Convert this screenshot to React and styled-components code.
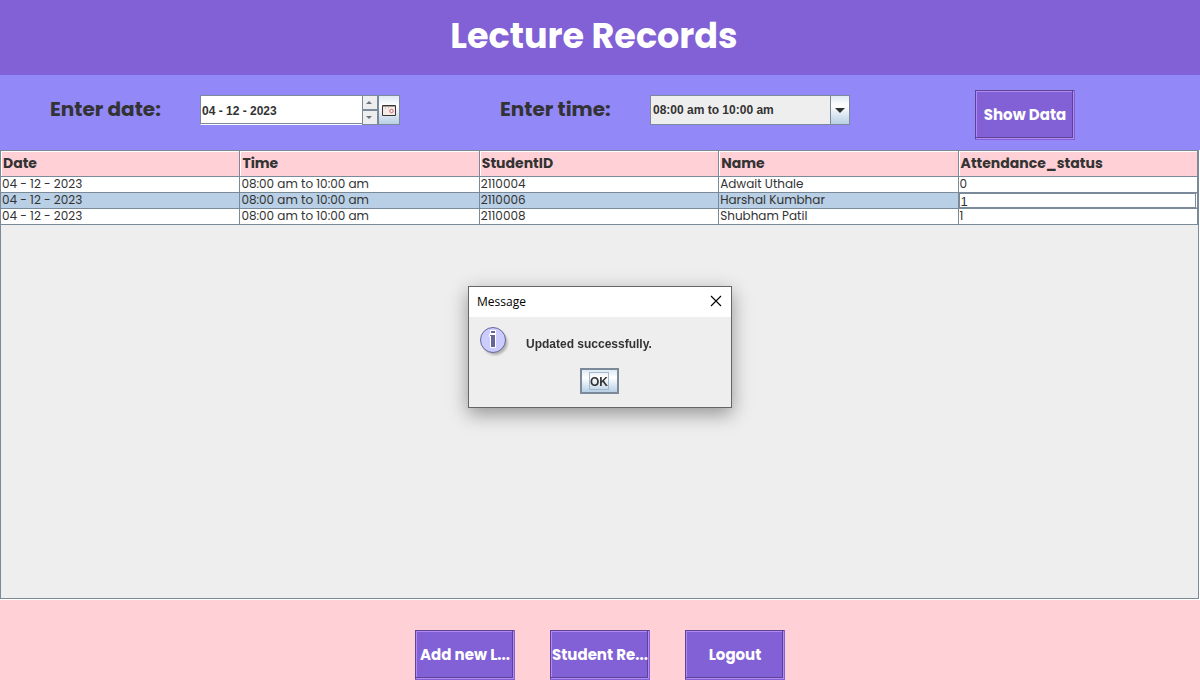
import React, { useState } from "react";
import styled, { createGlobalStyle } from "styled-components";

const heading = 'Poppins, Inter, "Open Sans", sans-serif';
const system = '"Liberation Sans", Arial, sans-serif';
const line = "#7a8a99";

const GlobalStyle = createGlobalStyle`
  *, *::before, *::after { box-sizing: border-box; }
  body { margin: 0; background: #ffd0d6; color: #333; }
  button, input, select { font: inherit; color: inherit; }
`;

const Page = styled.div`
  min-height: 100vh;
  display: flex;
  flex-direction: column;
  font-family: ${heading};
`;

const Header = styled.header`
  height: 75px;
  padding: 0 12px 4px 0;
  display: flex;
  align-items: center;
  justify-content: center;
  background: #8161d5;
`;

const Title = styled.h1`
  margin: 0;
  font-size: 35px;
  line-height: 48px;
  font-weight: 700;
  color: #fff;
`;

const Filters = styled.form`
  min-height: 75px;
  padding: 15px 50px 10px;
  display: flex;
  flex-wrap: wrap;
  align-items: flex-start;
  background: #9288f8;
`;

const Field = styled.div`
  display: flex;
  align-items: flex-start;
  margin-right: ${(p) => p.$gap};
  padding-top: 5px;
`;

const FieldLabel = styled.label`
  width: 150px;
  font-size: 20px;
  line-height: 28px;
  font-weight: 700;
`;

const DatePicker = styled.div`
  display: flex;
  width: 200px;
  height: 30px;
`;

const DateInput = styled.input`
  flex: 1;
  min-width: 0;
  padding: 2px 1px 0;
  border: 1px solid ${line};
  border-right: 0;
  border-bottom-color: #fff;
  background: #fff;
  box-shadow: inset 0 -1px ${line};
  font: 700 12px/16px ${system};
  outline: 0;
`;

const Spinner = styled.div`
  display: grid;
  grid-template-rows: 1fr 1fr;
  width: 16px;
`;

const SpinButton = styled.button`
  display: grid;
  place-items: center;
  padding: 0 2px 0 0;
  border: 1px solid ${line};
  background: #eee;
`;

const CalendarButton = styled.button`
  display: grid;
  place-items: center;
  width: 22px;
  padding: 0;
  border: 1px solid ${line};
  background: linear-gradient(#dfe9f3, #fff 35%, #b8cfe5);
`;

const SelectBox = styled.div`
  position: relative;
  width: 200px;
  height: 30px;
`;

const Select = styled.select`
  appearance: none;
  width: 100%;
  height: 100%;
  padding: 0 22px 0 2px;
  border: 1px solid ${line};
  border-radius: 0;
  background: #eee;
  font: 700 12px/16px ${system};
  outline: 0;
`;

const SelectArrow = styled.span`
  position: absolute;
  top: 0;
  right: 0;
  width: 20px;
  height: 100%;
  display: grid;
  place-items: center;
  border: 1px solid ${line};
  background: linear-gradient(#dfe9f3, #fff 35%, #b8cfe5);
  pointer-events: none;
`;

const ActionButton = styled.button`
  width: 100px;
  height: 50px;
  padding: 0;
  border: 0;
  background: #8161d5;
  box-shadow: inset -1px -1px #8161d5, inset 1px 1px #5a4495,
    inset -2px -2px #b488f5, inset -3px -3px #5a4495, inset 2px 2px #b488f5;
  font-size: 15px;
  line-height: 20px;
  font-weight: 700;
  color: #fff;
  white-space: nowrap;
`;

const Records = styled.main`
  flex: 1;
  margin-right: 1px;
  border: 1px solid ${line};
  box-shadow: 1px 0 #fff, inset 0 1px #fff;
  background: #eee;
`;

const Table = styled.table`
  width: 100%;
  table-layout: fixed;
  border-collapse: separate;
  border-spacing: 0;
`;

const HeadCell = styled.th`
  height: 26px;
  padding: 0 0 2px 2px;
  border: solid ${line};
  border-width: 0 1px 1px 0;
  background: #ffd0d6;
  box-shadow: inset 1px 1px #fff;
  font-size: 14px;
  line-height: 20px;
  font-weight: 700;
  text-align: left;
`;

const Row = styled.tr`
  background: ${(p) => (p.$selected ? "#b8cfe5" : "#fff")};
`;

const Cell = styled.td`
  height: 16px;
  padding: 0 0 1px 1px;
  border: solid ${line};
  border-width: 0 1px 1px 0;
  font-size: 12px;
  line-height: 14px;
  white-space: nowrap;
`;

const EditCell = styled(Cell)`
  padding: 0;
  background: #fff;
`;

const CellInput = styled.input`
  display: block;
  width: 100%;
  height: 15px;
  padding: 2px 1px 0;
  border: 1px solid ${line};
  border-right-color: #fff;
  box-shadow: inset -1px 0 ${line};
  background: #fff;
  font: 400 13px/12px ${system};
  outline: 0;
`;

const Footer = styled.footer`
  min-height: 101px;
  padding: 30px 0 20px;
  display: flex;
  flex-wrap: wrap;
  justify-content: center;
  gap: 35px;
  border-top: 1px solid #fff;
  background: #ffd0d6;
`;

const Overlay = styled.div`
  position: fixed;
  inset: 0;
  display: flex;
  align-items: center;
  justify-content: center;
  padding-bottom: 6px;
`;

const Dialog = styled.section`
  width: 264px;
  border: 1px solid #656565;
  background: #eee;
  box-shadow: 0 6px 18px rgba(0, 0, 0, 0.38);
`;

const DialogBar = styled.div`
  height: 30px;
  padding: 0 8px;
  display: flex;
  align-items: center;
  justify-content: space-between;
  background: #fff;
`;

const DialogTitle = styled.h2`
  margin: 0;
  font: 400 12px/16px "Open Sans", "Noto Sans", sans-serif;
  color: #000;
`;

const CloseButton = styled.button`
  display: grid;
  place-items: center;
  padding: 0 0 2px;
  border: 0;
  background: transparent;
`;

const DialogBody = styled.div`
  display: flex;
  align-items: flex-start;
  gap: 16px;
  padding: 9px 10px 0;
  height: 51px;
`;

const Message = styled.p`
  margin: 10px 0 0;
  font: 700 12px/16px ${system};
`;

const DialogActions = styled.div`
  height: 39px;
  display: flex;
  justify-content: center;
  align-items: flex-start;
  padding-right: 2px;
`;

const OkButton = styled.button`
  width: 39px;
  height: 26px;
  padding: 0;
  display: grid;
  place-items: center;
  border: 2px solid ${line};
  background: linear-gradient(#dfe9f3, #fff 35%, #b8cfe5);
  font: 700 12px/16px ${system};
`;

const FocusRing = styled.span`
  padding-top: 2px;
  border: 1px solid #a3b8cc;
  line-height: 14px;
`;

const columns = ["Date", "Time", "StudentID", "Name", "Attendance_status"];
const slot = "08:00 am to 10:00 am";
const records = [
  ["04 - 12 - 2023", slot, "2110004", "Adwait Uthale", "0"],
  ["04 - 12 - 2023", slot, "2110006", "Harshal Kumbhar", "1"],
  ["04 - 12 - 2023", slot, "2110008", "Shubham Patil", "1"],
];
const selectedRow = 1;

function InfoIcon() {
  return (
    <svg width="31" height="31" viewBox="0 0 31 31" aria-hidden="true">
      <defs>
        <filter id="soft" x="-20%" y="-20%" width="140%" height="140%">
          <feGaussianBlur stdDeviation="1" />
        </filter>
      </defs>
      <circle cx="16" cy="16.5" r="12.5" fill="#888" opacity=".6" filter="url(#soft)" />
      <circle cx="14" cy="14" r="12.5" fill="#ccccff" stroke="#666699" />
      <path d="M11 4h6v4h-6zM10 8h7v14h-6v-11h-1z" fill="#fff" />
      <path d="M12 5h4v2h-4zM11 9h5v12h-4v-11h-1z" fill="#666699" />
    </svg>
  );
}

export default function App() {
  const [date, setDate] = useState("04 - 12 - 2023");
  const [status, setStatus] = useState("1");
  const [open, setOpen] = useState(true);

  return (
    <Page>
      <GlobalStyle />
      <Header>
        <Title>Lecture Records</Title>
      </Header>
      <Filters onSubmit={(e) => e.preventDefault()}>
        <Field $gap="100px">
          <FieldLabel htmlFor="date">Enter date:</FieldLabel>
          <DatePicker>
            <DateInput id="date" value={date} onChange={(e) => setDate(e.target.value)} />
            <Spinner>
              <SpinButton type="button" aria-label="Next day">
                <svg width="6" height="3"><path d="M0 3l3-3 3 3z" fill="#66727e" /></svg>
              </SpinButton>
              <SpinButton type="button" aria-label="Previous day">
                <svg width="6" height="3"><path d="M0 0h6l-3 3z" fill="#66727e" /></svg>
              </SpinButton>
            </Spinner>
            <CalendarButton type="button" aria-label="Open calendar">
              <svg width="14" height="11" viewBox="0 0 14 11">
                <path d="M.5.5h13v10H.5z" fill="#f3ece4" stroke="#3b3232" />
                <path d="M1 1.500h12" stroke="#a39a9a" />
                <path d="M3.500 2v2M6.500 2v2" stroke="#d8cfc8" />
                <circle cx="9.500" cy="6" r="1.700" fill="#fff" stroke="#d65c6c" />
              </svg>
            </CalendarButton>
          </DatePicker>
        </Field>
        <Field $gap="125px">
          <FieldLabel htmlFor="time">Enter time:</FieldLabel>
          <SelectBox>
            <Select id="time" defaultValue={slot}>
              <option>{slot}</option>
            </Select>
            <SelectArrow>
              <svg width="10" height="5"><path d="M0 0h10l-5 5z" fill="#333" /></svg>
            </SelectArrow>
          </SelectBox>
        </Field>
        <ActionButton type="submit">Show Data</ActionButton>
      </Filters>
      <Records>
        <Table>
          <thead>
            <tr>
              {columns.map((name) => (
                <HeadCell key={name} scope="col">{name}</HeadCell>
              ))}
            </tr>
          </thead>
          <tbody>
            {records.map((record, r) => (
              <Row key={record[2]} $selected={r === selectedRow}>
                {record.map((value, c) =>
                  r === selectedRow && c === columns.length - 1 ? (
                    <EditCell key={c}>
                      <CellInput
                        aria-label="Attendance status"
                        value={status}
                        onChange={(e) => setStatus(e.target.value)}
                      />
                    </EditCell>
                  ) : (
                    <Cell key={c}>{value}</Cell>
                  )
                )}
              </Row>
            ))}
          </tbody>
        </Table>
      </Records>
      <Footer>
        <ActionButton type="button">Add new L...</ActionButton>
        <ActionButton type="button">Student Re...</ActionButton>
        <ActionButton type="button">Logout</ActionButton>
      </Footer>
      {open && (
        <Overlay>
          <Dialog role="dialog" aria-labelledby="dialog-title">
            <DialogBar>
              <DialogTitle id="dialog-title">Message</DialogTitle>
              <CloseButton type="button" aria-label="Close" onClick={() => setOpen(false)}>
                <svg width="14" height="12" viewBox="0 0 14 12">
                  <path d="M2 1l10 10M12 1L2 11" stroke="#000" strokeWidth="1.100" />
                </svg>
              </CloseButton>
            </DialogBar>
            <DialogBody>
              <InfoIcon />
              <Message>Updated successfully.</Message>
            </DialogBody>
            <DialogActions>
              <OkButton type="button" onClick={() => setOpen(false)}>
                <FocusRing>OK</FocusRing>
              </OkButton>
            </DialogActions>
          </Dialog>
        </Overlay>
      )}
    </Page>
  );
}
